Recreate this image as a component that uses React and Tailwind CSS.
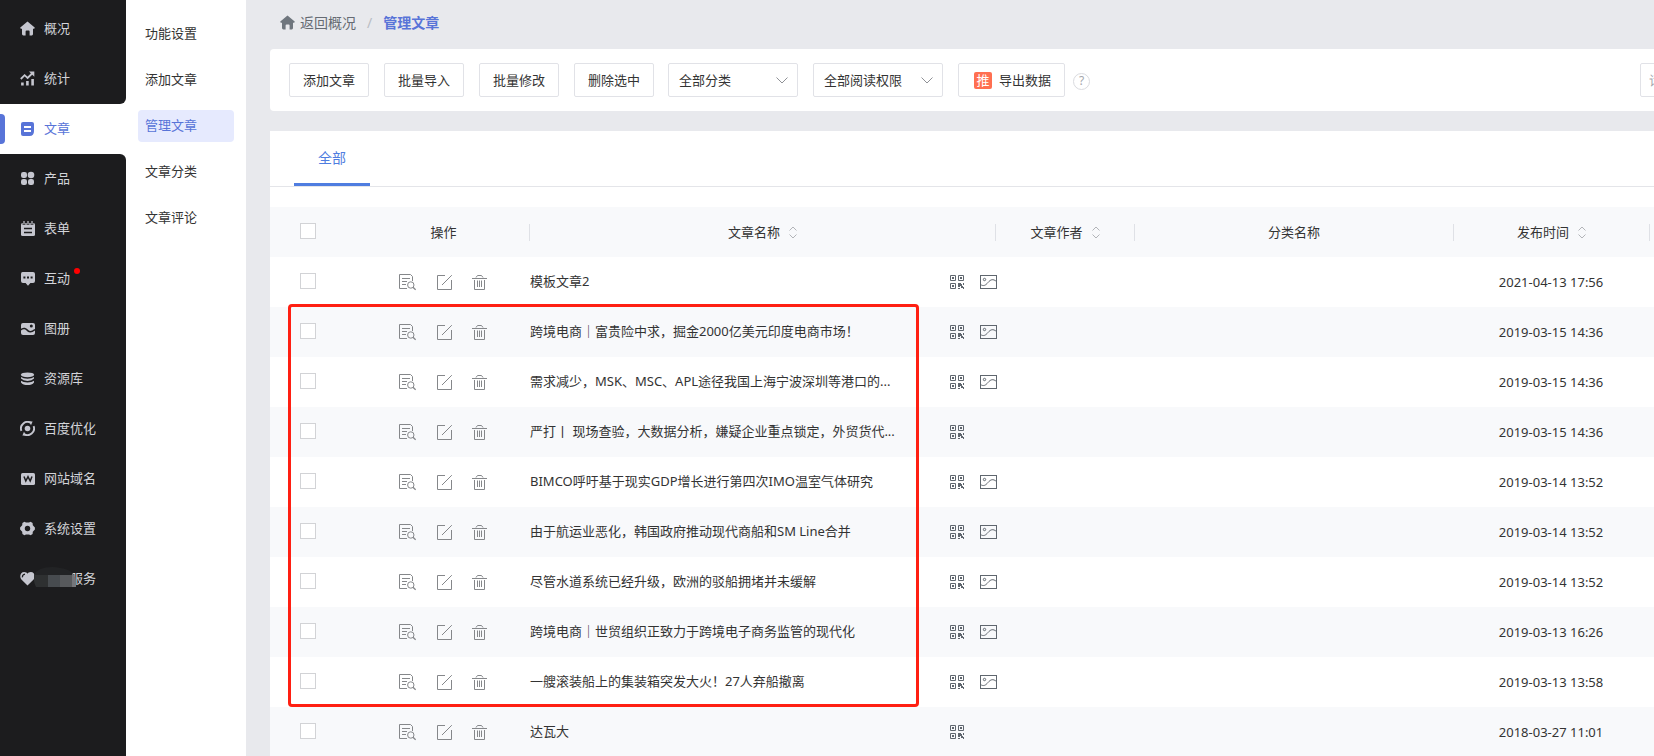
import React, { useState } from "react";

const Svg = ({ w = 15, h = 15, className = "", children }) => (
  <svg
    xmlns="http://www.w3.org/2000/svg"
    width={w}
    height={h}
    viewBox={`0 0 ${w} ${h}`}
    fill="none"
    aria-hidden="true"
    className={`shrink-0 ${className}`}
  >
    {children}
  </svg>
);

const HomeIcon = ({ className }) => (
  <Svg className={className}>
    <path
      d="M7.5 0.4 L14.7 6.6 Q15 7.6 14 7.7 H13 V13 Q13 14.4 11.8 14.4 H9.6 V10.4 Q9.6 9.6 8.8 9.6 H6.6 Q5.6 9.6 5.6 10.4 V14.4 H3.4 Q2 14.4 2 13 V7.7 H1 Q0 7.6 0.3 6.6 Z"
      fill="currentColor"
    />
  </Svg>
);

const StatIcon = () => (
  <Svg>
    <path d="M0.8 8 L4.6 4.2 L7.6 7 L12.6 2" stroke="currentColor" strokeWidth="1.8" />
    <path d="M9 0.5 H14.3 V5.8 Z" fill="currentColor" />
    <path d="M2.4 11.4 V14.6 M7.4 10 V14.6 M12.6 8 V14.6" stroke="currentColor" strokeWidth="2.6" />
  </Svg>
);

const ArticleIcon = () => (
  <Svg>
    <path
      d="M3 1 H12 Q14 1 14 3 V10 Q14 15 9.5 15 H3 Q1 15 1 13 V3 Q1 1 3 1 Z"
      fill="currentColor"
    />
    <path d="M4 6 H11 M4 10 H11" stroke="#fff" strokeWidth="1.8" />
  </Svg>
);

const ProductIcon = () => (
  <Svg>
    <rect x="1" y="1" width="6" height="6" rx="2.2" fill="currentColor" />
    <circle cx="11" cy="4" r="3.3" fill="currentColor" />
    <rect x="1" y="8" width="6" height="6" rx="2.2" fill="currentColor" />
    <rect x="8" y="8" width="6" height="6" rx="2.2" fill="currentColor" />
  </Svg>
);

const FormIcon = () => (
  <Svg>
    <rect x="1" y="2" width="14" height="13" rx="1.5" fill="currentColor" />
    <path d="M4 0 V4 M8 0 V4 M12 0 V4" stroke="#1c1c1e" strokeWidth="2.6" />
    <path d="M4 0 V3.5 M8 0 V3.5 M12 0 V3.5" stroke="currentColor" strokeWidth="1.2" />
    <path d="M4 7.5 H12 M4 11.5 H12" stroke="#1c1c1e" strokeWidth="1.6" />
  </Svg>
);

const ChatIcon = () => (
  <Svg>
    <path
      d="M2.5 1 H13 Q15 1 15 3 V10 Q15 12 13 12 H10.4 L8 14.8 L5.6 12 H3 Q1 12 1 10 V3 Q1 1 2.5 1 Z"
      fill="currentColor"
    />
    <path d="M3.4 6.6 h2 M7 6.6 h2 M10.6 6.6 h2" stroke="#1c1c1e" strokeWidth="2" />
  </Svg>
);

const AlbumIcon = () => (
  <Svg>
    <rect x="1" y="2" width="14" height="12" rx="2" fill="currentColor" />
    <path d="M0.5 9 C4 6 6 8 8 9.8 S12 11 15 8.6" stroke="#1c1c1e" strokeWidth="1.6" />
    <circle cx="11.3" cy="5" r="1.5" fill="#1c1c1e" />
  </Svg>
);

const StoreIcon = () => (
  <Svg>
    <ellipse cx="7.5" cy="3.8" rx="6.6" ry="2.4" fill="currentColor" />
    <path d="M1 6 Q3 7.8 7.5 7.8 T14 6 V7.6 Q12 10 7.5 10 T1 7.6 Z" fill="currentColor" />
    <path d="M1 9.8 Q3 11.6 7.5 11.6 T14 9.8 V11.4 Q12 14 7.5 14 T1 11.4 Z" fill="currentColor" />
  </Svg>
);

const SeoIcon = () => (
  <Svg>
    <path d="M1.4 9.8 A6.5 6.5 0 0 1 11 2" stroke="currentColor" strokeWidth="1.9" />
    <path d="M13.6 5.2 A6.5 6.5 0 0 1 4 13" stroke="currentColor" strokeWidth="1.9" />
    <path d="M8.8 0.2 L12.6 0.6 L11 4.2 Z M6.2 14.8 L2.4 14.4 L4 10.8 Z" fill="currentColor" />
    <circle cx="7.5" cy="7.5" r="2.8" fill="currentColor" />
  </Svg>
);

const DomainIcon = () => (
  <Svg>
    <rect x="1" y="2" width="14" height="12" rx="1.6" fill="currentColor" />
    <path d="M4 5.4 L5.8 10 L8 5.6 L10.2 10 L12 5.4" stroke="#1c1c1e" strokeWidth="1.5" />
  </Svg>
);

const GearIcon = () => (
  <Svg>
    <path
      d="M4.4 0.8 L6 1.5 H9 L10.6 0.8 L12.6 2 L12.8 4.2 L14.9 6.6 V8.4 L12.8 10.8 L12.6 13 L10.6 14.2 L9 13.5 H6 L4.4 14.2 L2.4 13 L2.2 10.8 L0.1 8.4 V6.6 L2.2 4.2 L2.4 2 Z"
      fill="currentColor"
    />
    <circle cx="7.5" cy="7.5" r="2.7" fill="#1c1c1e" />
  </Svg>
);

const HeartIcon = () => (
  <Svg>
    <path
      d="M7.5 14.6 L1.4 8.6 C-1 5.6 0.6 1 4.2 1 C5.8 1 7 1.8 7.5 2.8 C8 1.8 9.2 1 10.8 1 C14.4 1 16 5.6 13.6 8.6 Z"
      fill="currentColor"
    />
    <path d="M2.4 6.4 Q2.2 3.6 5 3.2" stroke="#1c1c1e" strokeWidth="1.2" />
  </Svg>
);

const PreviewIcon = () => (
  <Svg w={17} h={17}>
    <path d="M13.5 7 V2.5 L11.5 0.5 H0.5 V14.5 H8" stroke="currentColor" />
    <path d="M3 4.5 H11 M3 7.5 H8 M3 10.5 H7" stroke="currentColor" />
    <circle cx="11.8" cy="11" r="3.2" stroke="currentColor" />
    <path d="M14 13.2 L16.6 15.8" stroke="currentColor" strokeWidth="1.3" />
  </Svg>
);

const EditIcon = () => (
  <Svg w={15} h={15}>
    <path d="M8 0.5 H0.5 V14.5 H14.5 V5" stroke="currentColor" />
    <path d="M5 10 L14.8 0.2" stroke="currentColor" />
  </Svg>
);

const TrashIcon = () => (
  <Svg w={15} h={15}>
    <path d="M0 3.5 H15 M4 2.5 L5.5 0.5 H9.5 L11 2.5" stroke="currentColor" />
    <path d="M2.5 5 V14.5 H12.5 V5 M5.5 5.5 V12 M7.5 5.5 V12 M9.5 5.5 V12" stroke="currentColor" />
  </Svg>
);

const QrIcon = () => (
  <Svg w={15} h={14}>
    <path d="M0.5 0.5 h5 v5 h-5 Z M8.5 0.5 h5 v5 h-5 Z M0.5 8.5 h5 v5 h-5 Z" stroke="currentColor" />
    <path
      d="M2 2 h2 v2 h-2 Z M10 2 h2 v2 h-2 Z M2 10 h2 v2 h-2 Z M8 8 h3 v1 h1 v2 h-2 v1 h-2 Z M13 8 h1 v2 h-1 Z M11 11 h2 v1 h1 v2 h-1 v-1 h-2 Z M8 13 h2 v1 h-2 Z"
      fill="currentColor"
    />
  </Svg>
);

const PictureIcon = () => (
  <Svg w={17} h={14}>
    <rect x="0.5" y="0.5" width="16" height="13" stroke="currentColor" />
    <circle cx="4.5" cy="4.5" r="1.2" stroke="currentColor" />
    <path d="M0.5 9.5 C3.5 11.5 5.5 10.5 8 7.5 S13 3.5 16.5 6.5" stroke="currentColor" />
  </Svg>
);

const Sorter = () => (
  <Svg w={8} h={13} className="text-[#a9abb0]">
    <path d="M0.5 4.5 L4 1 L7.5 4.5 M0.5 8.5 L4 12 L7.5 8.5" stroke="currentColor" strokeWidth="0.9" />
  </Svg>
);

const topNav = [
  { name: "概况", icon: <HomeIcon /> },
  { name: "统计", icon: <StatIcon /> },
];

const bottomNav = [
  { name: "产品", icon: <ProductIcon /> },
  { name: "表单", icon: <FormIcon /> },
  { name: "互动", icon: <ChatIcon />, dot: true },
  { name: "图册", icon: <AlbumIcon /> },
  { name: "资源库", icon: <StoreIcon /> },
  { name: "百度优化", icon: <SeoIcon /> },
  { name: "网站域名", icon: <DomainIcon /> },
  { name: "系统设置", icon: <GearIcon /> },
  { name: "服务", icon: <HeartIcon />, masked: true },
];

const subNav = ["功能设置", "添加文章", "管理文章", "文章分类", "文章评论"];

const articles = [
  { title: "模板文章2", pic: true, date: "2021-04-13 17:56" },
  { title: "跨境电商｜富贵险中求，掘金2000亿美元印度电商市场！", pic: true, date: "2019-03-15 14:36" },
  { title: "需求减少，MSK、MSC、APL途径我国上海宁波深圳等港口的...", pic: true, date: "2019-03-15 14:36" },
  { title: "严打丨 现场查验，大数据分析，嫌疑企业重点锁定，外贸货代...", pic: false, date: "2019-03-15 14:36" },
  { title: "BIMCO呼吁基于现实GDP增长进行第四次IMO温室气体研究", pic: true, date: "2019-03-14 13:52" },
  { title: "由于航运业恶化，韩国政府推动现代商船和SM Line合并", pic: true, date: "2019-03-14 13:52" },
  { title: "尽管水道系统已经升级，欧洲的驳船拥堵并未缓解", pic: true, date: "2019-03-14 13:52" },
  { title: "跨境电商｜世贸组织正致力于跨境电子商务监管的现代化", pic: true, date: "2019-03-13 16:26" },
  { title: "一艘滚装船上的集装箱突发大火！27人弃船撤离", pic: true, date: "2019-03-13 13:58" },
  { title: "达瓦大", pic: false, date: "2018-03-27 11:01" },
];

const NavItem = ({ item }) => (
  <a href="#" className="relative flex h-[50px] items-center gap-[9px] pb-0.5 pl-5 text-[#d3d4d9]">
    <span className="text-[#c5c6cf]">{item.icon}</span>
    <span className={item.masked ? "pl-[26px]" : "relative"}>
      {item.name}
      {item.dot && <i className="absolute -right-2.5 top-0 h-1.5 w-1.5 rounded-full bg-[#ff0000]"></i>}
    </span>
    {item.masked && (
      <Svg w={42} h={21} className="absolute left-[34px] top-[13px]">
        <path d="M0 8 Q4 0 18 0 Q36 1 40 8 Z" fill="#222325" />
        <path d="M0 8 H14 V20 H2 Q-1 14 0 8 Z" fill="#2e3031" />
        <path d="M14 8 H26 V20 H14 Z" fill="#474b4f" />
        <path d="M26 8 H38 V20 H26 Z" fill="#57595c" />
        <path d="M38 6 Q43 9 42 20 H38 Z" fill="#74757a" />
      </Svg>
    )}
  </a>
);

const ToolButton = ({ children }) => (
  <button className="h-[34px] w-20 rounded-xs border border-[#e1e2e7] bg-white">{children}</button>
);

const ToolSelect = ({ label }) => (
  <div className="relative">
    <select
      aria-label={label}
      className="h-[34px] w-[130px] appearance-none rounded-xs border border-[#e1e2e7] bg-white pl-2.5"
    >
      <option>{label}</option>
    </select>
    <Svg w={12} h={7} className="pointer-events-none absolute right-2.5 top-3.5 text-[#8f9196]">
      <path d="M0.5 0.5 L6 6 L11.5 0.5" stroke="currentColor" />
    </Svg>
  </div>
);

const CheckBox = ({ label, checked, onChange }) => (
  <input
    type="checkbox"
    aria-label={label}
    checked={checked}
    onChange={onChange}
    className="mb-0.5 block h-4 w-4 appearance-none border border-[#d2d3d6] bg-white checked:bg-[#5874d8]"
  />
);

// header cell, the short line on the left separates it from the previous one
const HeadCell = ({ children, sortable, line = true }) => (
  <th className="p-0 font-normal">
    <div className={`flex h-[17px] items-center justify-center gap-[9px] ${line ? "border-l border-[#dfe1e6]" : ""}`}>
      {children}
      {sortable && <Sorter />}
    </div>
  </th>
);

const App = () => {
  const [selected, setSelected] = useState([]);
  const allChecked = selected.length === articles.length;

  const toggle = (i) =>
    setSelected(selected.includes(i) ? selected.filter((s) => s !== i) : [...selected, i]);

  return (
    <div className="flex h-screen overflow-hidden bg-[#e8e9ed] font-['Noto_Sans','Noto_Sans_CJK_SC',sans-serif] text-[13px] leading-5 text-[#333]">
      {/* Main menu */}
      <nav className="flex w-[126px] shrink-0 flex-col bg-white">
        <div className="rounded-br-md bg-[#1c1c1e] pt-1">
          {topNav.map((item) => (
            <NavItem key={item.name} item={item} />
          ))}
        </div>
        <a href="#" className="relative flex h-[50px] shrink-0 items-center gap-[9px] pb-0.5 pl-5 text-[#5874d8]">
          <i className="absolute left-0 top-2.5 h-[30px] w-[5px] rounded-r bg-[#5874d8]"></i>
          <ArticleIcon />
          文章
        </a>
        <div className="flex-1 rounded-tr-md bg-[#1c1c1e]">
          {bottomNav.map((item) => (
            <NavItem key={item.name} item={item} />
          ))}
        </div>
      </nav>

      {/* Sub menu */}
      <nav className="flex w-[120px] shrink-0 flex-col gap-3.5 bg-white px-3 pt-[18px]">
        {subNav.map((name) => (
          <a
            key={name}
            href="#"
            className={`flex h-8 items-center rounded pb-0.5 pl-[7px] ${
              name === "管理文章" ? "bg-[#e6eafe] text-[#5874d8]" : ""
            }`}
          >
            {name}
          </a>
        ))}
      </nav>

      <main className="min-w-0 flex-1 overflow-hidden pl-6">
        {/* Breadcrumb */}
        <div className="flex h-[49px] items-center pb-1 pl-2.5 text-sm text-[#666b73]">
          <a href="#" className="flex items-center gap-[5px]">
            <HomeIcon className="text-[#6f767e]" />
            返回概况
          </a>
          <span className="px-[11px] text-[#b9bdc4]">/</span>
          <a href="#" className="font-bold text-[#5874d8]">管理文章</a>
        </div>

        {/* Toolbar */}
        <div className="flex h-[62px] items-center gap-3.5 overflow-hidden rounded-l bg-white pl-[19px]">
          <div className="flex shrink-0 gap-[15px]">
            <ToolButton>添加文章</ToolButton>
            <ToolButton>批量导入</ToolButton>
            <ToolButton>批量修改</ToolButton>
            <ToolButton>删除选中</ToolButton>
          </div>
          <div className="flex shrink-0 items-center gap-[15px]">
            <ToolSelect label="全部分类" />
            <ToolSelect label="全部阅读权限" />
            <div className="flex items-center gap-2">
              <button className="flex h-[34px] w-[107px] items-center gap-[7px] rounded-xs border border-[#e1e2e7] bg-white pl-[15px]">
                <span className="flex h-[17px] w-[18px] items-center justify-center rounded-xs bg-[#ff6f51] text-white">
                  推
                </span>
                导出数据
              </button>
              <button
                aria-label="帮助"
                className="mt-0.5 flex h-[17px] w-[17px] items-center justify-center rounded-full border border-[#dadbdf] text-xs text-[#a4a6ab]"
              >
                ?
              </button>
            </div>
          </div>
          <input
            type="text"
            aria-label="搜索文章"
            placeholder="请输入文章名称"
            className="-mr-[206px] ml-auto h-[34px] w-[220px] shrink-0 rounded-xs border border-[#e1e2e7] px-2 placeholder:text-[#a4a6ab]"
          />
        </div>

        <div className="mt-5 bg-white">
          {/* Tabs */}
          <div className="flex h-14 border-b border-[#e4e5e9] pl-6">
            <button className="w-[76px] border-b-3 border-[#4f7de0] pt-0.5 text-sm text-[#4f7de0]">全部</button>
          </div>

          {/* Article list */}
          <div className="relative pt-5">
            <table className="w-full table-fixed border-collapse">
              <colgroup>
                <col className="w-[88px]" />
                <col className="w-[171px]" />
                <col className="w-[466px]" />
                <col className="w-[139px]" />
                <col />
                <col className="w-[196px]" />
                <col className="w-[5px]" />
              </colgroup>
              <thead>
                <tr className="h-[50px] bg-[#f8f9fb]">
                  <th className="py-0 pl-[30px] pr-0">
                    <CheckBox
                      label="全选"
                      checked={allChecked}
                      onChange={() => setSelected(allChecked ? [] : articles.map((_, i) => i))}
                    />
                  </th>
                  <HeadCell line={false}>操作</HeadCell>
                  <HeadCell sortable>文章名称</HeadCell>
                  <HeadCell sortable>文章作者</HeadCell>
                  <HeadCell>分类名称</HeadCell>
                  <HeadCell sortable>发布时间</HeadCell>
                  <HeadCell></HeadCell>
                </tr>
              </thead>
              <tbody>
                {articles.map((a, i) => (
                  <tr key={i} className="h-[50px] even:bg-[#f8f9fb]">
                    <td className="py-0 pl-[30px] pr-0">
                      <CheckBox label={a.title} checked={selected.includes(i)} onChange={() => toggle(i)} />
                    </td>
                    <td className="py-0 pl-[41px] pr-0">
                      <div className="flex items-center text-[#85878a]">
                        <button aria-label="预览" className="mr-[21px]"><PreviewIcon /></button>
                        <button aria-label="编辑" className="mr-5"><EditIcon /></button>
                        <button aria-label="删除"><TrashIcon /></button>
                      </div>
                    </td>
                    <td className="py-0 pl-px pr-0">
                      <div className="flex items-center text-[#5f666e]">
                        <a href="#" className="w-[368px] shrink-0 whitespace-nowrap pb-0.5 text-[#333]">{a.title}</a>
                        <button aria-label="二维码" className="ml-[52px] mr-[15px]"><QrIcon /></button>
                        {a.pic && <button aria-label="图片"><PictureIcon /></button>}
                      </div>
                    </td>
                    <td></td>
                    <td></td>
                    <td className="p-0 text-center">{a.date}</td>
                    <td></td>
                  </tr>
                ))}
              </tbody>
            </table>

            {/* highlight frame around the imported articles */}
            <div className="pointer-events-none absolute left-[18px] top-[117px] h-[403px] w-[631px] rounded border-3 border-[#ff1f12]"></div>
          </div>
        </div>
      </main>
    </div>
  );
};

export default App;
